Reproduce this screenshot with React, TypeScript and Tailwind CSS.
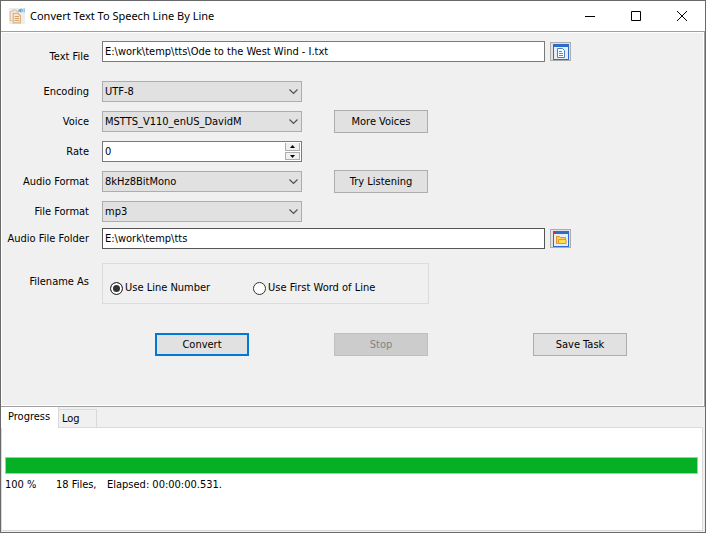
import { useState } from 'react'
import type { ReactNode } from 'react'

const encodings    = ['UTF-8', 'UTF-16', 'ANSI']
const voices       = ['MSTTS_V110_enUS_DavidM', 'MSTTS_V110_enUS_ZiraM']
const audioFormats = ['8kHz8BitMono', '16kHz16BitMono', '44kHz16BitStereo']
const fileFormats  = ['mp3', 'wav']

const textBox = 'h-[21px] bg-white border px-0.5 pb-px leading-4 text-black outline-none'

function AppIcon() {
  return (
    <svg className="w-4 h-4" viewBox="0 0 16 16" fill="none">
      <path fill="#ededed" d="M0 0h16v16H0z" />
      <path stroke="#e3c29c" strokeWidth="1.2" d="M3.6 12.5H1.2v-9h2l.8-1.3h3l.8 1.300h1.500v1.200" />
      <path fill="#f6e6d2" stroke="#dcb283" strokeWidth="1.2" d="M4.2 5.400h4.800l2.400 2.400v7H4.200z" />
      <path stroke="#d6a56f" d="M5.600 8.500h4.400M5.600 10.500h4.400M5.600 12.500h4.400" />
      <path fill="#4ba3d8" d="M9.500 1.500h1.300L12.500.3v4.500l-1.700-1.300H9.500z" />
      <path stroke="#6db4de" d="M13.600 1.200v2.600M15.200.5v4" />
    </svg>
  )
}

function BrowseButton({ label, children }: { label: string; children: ReactNode }) {
  return (
    <button type="button" aria-label={label} className="w-[21px] h-[19px] shrink-0 bg-[#e1e1e1] border border-[#adadad] flex items-center justify-center">
      <svg className="w-4 h-4" viewBox="0 0 16 16" fill="none">
        <path fill="#2f6bc9" d="M0 0h16v16H0z" />
        <path fill="#e6edf8" d="M1 3h14v12H1z" />
        <path fill="#d8203c" d="M1 1h1v1H1z" />
        {children}
      </svg>
    </button>
  )
}

function Row({ label, id, children }: { label: string; id: string; children: ReactNode }) {
  return (
    <div className="flex items-center h-[21px]">
      <label htmlFor={id} className="w-[86px] mr-[13px] shrink-0 flex justify-end whitespace-nowrap">{label}</label>
      {children}
    </div>
  )
}

function Select({ id, options }: { id: string; options: string[] }) {
  return (
    <div className="relative w-[200px] h-[21px]">
      <select id={id} className="w-full h-full appearance-none bg-[#e1e1e1] border border-[#adadad] pl-0.5 pr-5 text-black outline-none">
        {options.map(o => <option key={o}>{o}</option>)}
      </select>
      <svg className="absolute right-1 top-2 w-[9px] h-[6px] pointer-events-none" viewBox="0 0 9 6" fill="none" stroke="#505050" strokeWidth="1.2">
        <path d="M.5.5l4 4 4-4" />
      </svg>
    </div>
  )
}

function PushButton({ children, className = 'border border-[#adadad]', disabled = false }: { children: ReactNode; className?: string; disabled?: boolean }) {
  return (
    <button type="button" disabled={disabled}
      className={`w-[94px] h-[23px] shrink-0 bg-[#e1e1e1] disabled:bg-[#cccccc] disabled:border-[#bfbfbf] disabled:text-[#838383] ${className}`}>
      {children}
    </button>
  )
}

export default function App() {
  const [rate, setRate]         = useState(0)
  const [textFile, setTextFile] = useState('E:\\work\\temp\\tts\\Ode to the West Wind - I.txt')
  const [folder, setFolder]     = useState('E:\\work\\temp\\tts')
  const [naming, setNaming]     = useState('number')
  const [tab, setTab]           = useState('Progress')
  const percent = 100

  return (
    <div className="min-h-screen flex flex-col bg-[#f0f0f0] border border-[#696969] text-black text-[11px] leading-4 font-['DejaVu_Sans_Condensed','DejaVu_Sans',sans-serif]">
      <header className="h-[30px] shrink-0 bg-white flex items-center pl-2">
        <AppIcon />
        <h1 className="flex-1 pl-[5px] text-[11px] font-['Noto_Sans',sans-serif]">Convert Text To Speech Line By Line</h1>
        <div className="flex h-full">
          <button type="button" aria-label="Minimize" className="w-[46px] flex items-center justify-center">
            <svg className="w-[10px] h-[10px]" viewBox="0 0 10 10" stroke="#000"><path d="M0 5.5h10" /></svg>
          </button>
          <button type="button" aria-label="Maximize" className="w-[46px] flex items-center justify-center">
            <svg className="w-[10px] h-[10px]" viewBox="0 0 10 10" fill="none" stroke="#000"><path d="M.5.5h9v9h-9z" /></svg>
          </button>
          <button type="button" aria-label="Close" className="w-[46px] flex items-center justify-center">
            <svg className="w-[10px] h-[10px]" viewBox="0 0 10 10" fill="none" stroke="#000"><path d="M0 0l10 10M10 0L0 10" /></svg>
          </button>
        </div>
      </header>

      <main className="h-[376px] shrink-0 border-y border-r border-[#a0a0a0]">
        <form className="h-full border border-white pt-2 pl-px" onSubmit={e => e.preventDefault()}>
          <div className="flex h-6 items-start">
            <label htmlFor="text-file" className="w-[86px] mr-[13px] shrink-0 self-end text-right">Text File</label>
            <input id="text-file" className={`${textBox} flex-1 max-w-[443px] border-[#7a7a7a]`} value={textFile} onChange={e => setTextFile(e.target.value)} />
            <div className="ml-[5px] mt-px">
              <BrowseButton label="Browse text file">
                <path fill="#fff" stroke="#3f85c6" d="M4.500 4.500h5l2 2v7h-7z" />
                <path stroke="#4c9a8c" d="M6 7.500h3M6 9.500h4M6 11.500h4" />
              </BrowseButton>
            </div>
          </div>

          <div className="mt-4 flex flex-col gap-[9px]">
            <Row label="Encoding" id="encoding"><Select id="encoding" options={encodings} /></Row>
            <Row label="Voice" id="voice">
              <Select id="voice" options={voices} />
              <div className="ml-8 flex"><PushButton>More Voices</PushButton></div>
            </Row>
            <Row label="Rate" id="rate">
              <div className="w-[200px] h-[21px] flex bg-white border border-[#7a7a7a]">
                <input id="rate" inputMode="numeric" className="flex-1 min-w-0 px-0.5 outline-none" value={rate} onChange={e => setRate(Number(e.target.value) || 0)} />
                <div className="w-[15px] mr-px flex flex-col justify-between py-px">
                  <button type="button" aria-label="Increase rate" onClick={() => setRate(rate + 1)} className="h-2 bg-[#f0f0f0] border border-t-0 border-[#adadad] flex items-center justify-center">
                    <svg className="w-[5px] h-[3px]" viewBox="0 0 5 3"><path d="M0 3l2.500-3L5 3z" /></svg>
                  </button>
                  <button type="button" aria-label="Decrease rate" onClick={() => setRate(rate - 1)} className="h-2 bg-[#f0f0f0] border border-[#adadad] flex items-center justify-center">
                    <svg className="w-[5px] h-[3px]" viewBox="0 0 5 3"><path d="M0 0h5L2.500 3z" /></svg>
                  </button>
                </div>
              </div>
            </Row>
            <Row label="Audio Format" id="audio-format">
              <Select id="audio-format" options={audioFormats} />
              <div className="ml-8 flex"><PushButton>Try Listening</PushButton></div>
            </Row>
            <Row label="File Format" id="file-format"><Select id="file-format" options={fileFormats} /></Row>
          </div>

          <div className="mt-[6px]">
            <Row label="Audio File Folder" id="folder">
              <input id="folder" className={`${textBox} flex-1 max-w-[443px] border-[#555]`} value={folder} onChange={e => setFolder(e.target.value)} />
              <div className="ml-[5px]">
                <BrowseButton label="Browse audio folder">
                  <path fill="#fbd35a" stroke="#df9126" d="M3.500 12.500v-7h3l1 1h5v6z" />
                  <path fill="#ffe14a" stroke="#e09a30" d="M5.500 8.500h7.500v4H5.500z" />
                </BrowseButton>
              </div>
            </Row>
          </div>

          <div className="mt-[14px] flex" role="radiogroup" aria-labelledby="naming-label">
            <span id="naming-label" className="w-[86px] mr-[13px] pt-[11px] shrink-0 text-right">Filename As</span>
            <div className="w-[327px] h-[41px] border border-[#dcdcdc] flex items-end pl-[7px] pb-[7px]">
              {[
                { value: 'number', text: 'Use Line Number' },
                { value: 'word', text: 'Use First Word of Line' },
              ].map(n => (
                <label key={n.value} className="w-[143px] flex items-center gap-0.5 whitespace-nowrap">
                  <input type="radio" name="naming" checked={naming === n.value} onChange={() => setNaming(n.value)}
                    className="appearance-none w-[13px] h-[13px] shrink-0 rounded-full bg-white border border-[#333] checked:bg-[#333] checked:shadow-[inset_0_0_0_2px_#fff]" />
                  {n.text}
                </label>
              ))}
            </div>
          </div>

          <div className="mt-[29px] pl-[152px] flex">
            <PushButton className="border-2 border-[#0078d7]">Convert</PushButton>
            <div className="ml-[85px] mr-[105px] flex"><PushButton disabled className="border">Stop</PushButton></div>
            <PushButton>Save Task</PushButton>
          </div>
        </form>
      </main>

      <section className="flex-1 flex flex-col pr-0.5 pb-px">
        <div role="tablist" className="h-5 flex items-end shrink-0">
          {['Progress', 'Log'].map(t => (
            <button key={t} type="button" role="tab" aria-selected={tab === t} onClick={() => setTab(t)}
              className={tab === t
                ? 'h-[21px] w-[58px] pl-[7px] pb-0.5 -mb-px relative text-left bg-white border-r border-[#d9d9d9]'
                : 'h-[18px] w-[38px] pl-[3px] text-left border-t border-r border-[#d9d9d9]'}>
              {t}
            </button>
          ))}
        </div>
        <div role="tabpanel" className="flex-1 bg-white border border-[#d9d9d9] pt-[29px] px-[3px]">
          {tab === 'Progress' && (
            <>
              <div role="progressbar" aria-label="Conversion progress" aria-valuenow={percent} className="mr-px h-[17px] border border-[#bcbcbc] bg-[#e6e6e6]">
                <div className="h-full bg-[#06b025]" style={{ width: `${percent}%` }} />
              </div>
              <div className="mt-[3px] flex">
                <span className="w-[51px]">{percent} %</span>
                <span className="w-[51px]">18 Files,</span>
                <span>Elapsed: 00:00:00.531.</span>
              </div>
            </>
          )}
        </div>
      </section>
    </div>
  )
}
